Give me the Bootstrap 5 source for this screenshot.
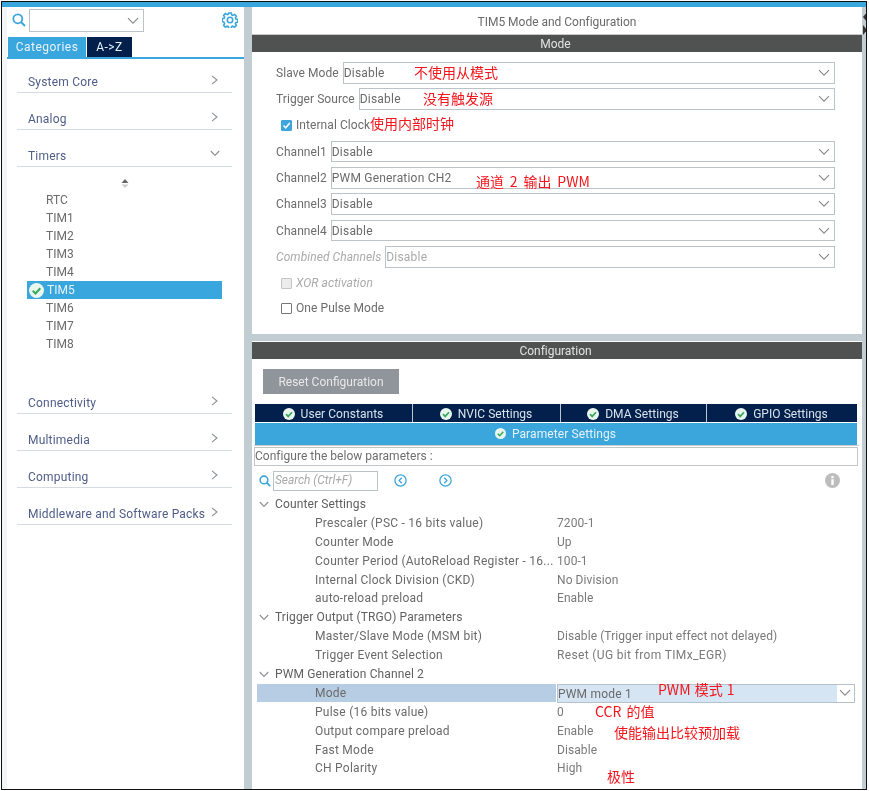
<!DOCTYPE html>
<html lang="en">
<head>
<meta charset="utf-8">
<title>TIM5 Mode and Configuration</title>
<link href="https://cdn.jsdelivr.net/npm/bootstrap@5.3.0/dist/css/bootstrap.min.css" rel="stylesheet">
<style>
html,body{margin:0;background:#fff;}
body{font-family:Roboto,"Liberation Sans",sans-serif;font-size:12px;letter-spacing:.2px;color:#666;overflow:hidden;}
svg{display:block;flex:none;}
.shot{position:relative;width:866px;height:789px;margin:1px 0 0 1px;border:1px solid #111;background:#c2ccd3;filter:blur(.35px);overflow:hidden;}
.topstrip{height:5px;background:#39a6dd;}
.main-row{height:782px;}
.side{width:242px;background:#fff;border-left:5px solid #f3f6f7;flex:none;}
.gutter{width:8px;background:#c2ccd3;flex:none;}
.work{width:610px;background:#fff;flex:none;}
.rail{width:4px;flex:none;}
.finder{height:30px;padding:2px 0 0 5px;}
.finder select,.dd{appearance:none;border:1px solid #bcc3c8;border-width:1.5px;border-radius:0;background:#fff url("data:image/svg+xml,%3Csvg xmlns='http://www.w3.org/2000/svg' viewBox='0 0 12 8'%3E%3Cpath d='M1 1.2l5 5 5-5' fill='none' stroke='%23888' stroke-width='1.1'/%3E%3C/svg%3E") no-repeat right 4px center/12px 8px;color:#6a6a6a;font:inherit;letter-spacing:.2px;padding:0 20px 0 0;outline:0;}
.finder select{width:115px;height:23px;margin-left:3px;}
.gearbox{margin-left:78px;margin-top:3px;}
.cat-tabs{height:20px;margin-left:1px;}
.cat-tab{height:20px;line-height:20px;text-align:center;font-size:12px;letter-spacing:.5px;color:#e8f2f8;}
.t-cat{width:78px;background:#39a6dd;}
.t-az{width:45px;margin-left:1px;background:#03204c;}
.cat-rule{height:2px;background:#39a6dd;}
.cat-list{padding:0 0 0 10px;width:225px;}
.cat-head{height:37px;border-bottom:1.5px solid #d5dbe1;color:#4f5d88;letter-spacing:.2px;padding:0 14px 2.5px 11px;display:flex;align-items:flex-end;justify-content:space-between;}
.cat-first{height:34px;}
.cat-head span{line-height:16px;white-space:nowrap;}
.cat-head svg{margin:0 0 5px 0;}
.cat-head svg.chev-down{margin:0 -2px 7px 0;}
.sort-mark{height:24px;padding-top:12px;}
.tim-list{height:186px;margin-left:10px;}
.tim-item{height:18px;line-height:18px;padding-left:19px;color:#6b6b6b;width:195px;letter-spacing:0;}
.tim-on{background:#39a6dd;color:#e6f3fa;padding-left:2px;display:flex;align-items:center;gap:3px;}
.title-bar{height:28px;line-height:30px;text-align:center;border-bottom:1px solid #c8c8c8;color:#6a6a6a;letter-spacing:-.02px;}
.dark-bar{height:17px;line-height:18px;text-align:center;background:#505251;color:#e2e2e2;letter-spacing:-.02px;padding-right:3px;}
.mode-form{height:282px;padding:10px 27px 0 24px;}
.f-row{height:21.5px;margin-bottom:4.8px;display:flex;align-items:center;gap:4px;white-space:nowrap;color:#6c6c6c;letter-spacing:.07px;}
.dd{flex:1 1 auto;min-width:0;height:21.5px;}
.dis{color:#aaa;font-style:italic;}
.dd-dis{color:#aaa;background-color:#fff;}
.box{width:11px;height:11px;border:1.5px solid #777;background:#fff;margin:0 0 0 5px;flex:none;border-radius:1px;}
.box-on{background:#3ea6dc;border-color:#3ea6dc;display:flex;align-items:center;justify-content:center;}
.box-dis{background:#ececec;border-color:#c4c4c4;}
.f-last{margin-top:-1px;}
.band{height:7px;background:#c2ccd3;}
.band-line{height:1px;background:#fff;}
.rst-wrap{height:45px;padding:10px 0 0 11px;}
.rst{width:136px;height:25px;border:0;border-radius:0;background:#8f959b;color:#e8e8e8;font-size:12px;letter-spacing:0;padding:1px 0 0;}
.rst:hover{background:#8f959b;color:#e8e8e8;}
.cfg-tabs{width:602px;margin-left:2.5px;height:18px;}
.cfg-tab{height:18px;padding-top:1px;background:#03204c;color:#d8e2ea;display:flex;align-items:center;justify-content:center;gap:6px;border-right:1px solid #b9c5d1;letter-spacing:.05px;flex:none;}
.cfg-tab:last-child{border-right:0;}
.ct1{width:158px;}.ct2{width:148px;}.ct3{width:146px;}.ct4{width:150px;}
.cfg-wide{margin-left:2.5px;width:602px;height:22px;background:#3aa6dc;color:#e4f2fa;margin-top:.5px;display:flex;align-items:center;justify-content:center;gap:6px;letter-spacing:.1px;}
.sep{height:1.5px;background:#c8cdd1;margin-left:2px;width:605px;}
.cfg-note{width:604px;margin:.5px 0 0 2px;height:19.5px;line-height:17px;border:1px solid #c2c6ca;padding-left:0;color:#6e6e6e;letter-spacing:.03px;}
.find-row{height:29px;padding:5px 0 0 7px;display:flex;align-items:flex-start;}
.find-box{width:105px;height:19.5px;margin-left:2px;border:1.5px solid #bcc3c8;line-height:17px;padding-left:1px;font-style:italic;color:#aaa;letter-spacing:-.05px;white-space:nowrap;}
.nav-a{margin:3px 0 0 16px;}
.nav-b{margin:3px 0 0 32px;}
.info-i{margin:2px 0 0 373px;}
.tree-row{height:18.9px;line-height:18.9px;display:flex;white-space:nowrap;color:#6a6a6a;letter-spacing:.25px;}
.tree-group{padding-left:7px;align-items:center;gap:6px;color:#5f5f5f;letter-spacing:.12px;}
.tree-key{width:305px;padding-left:63px;flex:none;overflow:hidden;}
.tree-val{color:#7a7a7a;letter-spacing:.08px;}
.val-wide{letter-spacing:.35px;}
.tree-sel .tree-key{background:#b7cde3;margin-left:5px;width:299px;padding-left:58px;height:18px;}
.dd-on{flex:none;width:298px;height:19px;margin-left:1px;background:url("data:image/svg+xml,%3Csvg xmlns='http://www.w3.org/2000/svg' viewBox='0 0 12 8'%3E%3Cpath d='M1 1.2l5 5 5-5' fill='none' stroke='%23888' stroke-width='1.1'/%3E%3C/svg%3E") no-repeat right 3px center/12px 8px,linear-gradient(to right,#d5e5f3 calc(100% - 17px),#fff 0);border-color:#b4c2cc;}
.note{position:absolute;font-family:"Noto Sans CJK SC","Liberation Sans",sans-serif;font-size:14px;line-height:20px;letter-spacing:0;color:#f2161c;white-space:nowrap;}
.n1{left:412px;top:60px;}
.n2{left:421px;top:86px;}
.n3{left:368px;top:110.500px;}
.n4{left:474px;top:169px;word-spacing:2.700px;}
.n5{left:656px;top:677px;word-spacing:1px;}
.n6{left:593px;top:699px;word-spacing:2px;}
.n7{left:612px;top:720px;}
.n8{left:605px;top:764px;}
.edge-arrow{position:absolute;right:-1px;}
.ea1{top:10px;}
.ea2{top:23px;}
</style>
</head>
<body>
<svg width="0" height="0" class="position-absolute">
<defs>
<symbol id="ok" viewBox="0 0 12 12"><circle cx="6" cy="6" r="6" fill="#e9f6ee"/><path d="M3 6.200l2.200 2.200L9 4.200" fill="none" stroke="#39a85f" stroke-width="1.700"/></symbol>
<symbol id="cr" viewBox="0 0 7 10"><path d="M1 .8L6 5l-5 4.200" fill="none" stroke="#8b9096" stroke-width="1.100"/></symbol>
<symbol id="cd" viewBox="0 0 10 7"><path d="M.8 1l4.200 4.500L9.200 1" fill="none" stroke="#8b9096" stroke-width="1.100"/></symbol>
<symbol id="mag" viewBox="0 0 14 14"><circle cx="5.800" cy="5.800" r="4.500" fill="none" stroke="#3aa6dc" stroke-width="1.800"/><path d="M9 9l4 4" stroke="#3aa6dc" stroke-width="2"/></symbol>
</defs>
</svg>
<div class="shot">
  <div class="topstrip"></div>
  <div class="d-flex main-row">
    <aside class="side">
      <div class="finder d-flex">
        <svg width="14" height="14" class="mt-1"><use href="#mag"/></svg>
        <select aria-label="Find"><option></option></select>
        <svg class="gearbox" width="16" height="16" viewBox="0 0 16 16"><path d="M6.700 1h2.600l.4 1.900 1.200.5 1.700-1 1.800 1.800-1 1.700.5 1.200 1.900.4v2.600l-1.900.4-.5 1.200 1 1.700-1.800 1.800-1.700-1-1.200.5-.4 1.900H6.700l-.4-1.900-1.200-.5-1.700 1-1.800-1.800 1-1.700-.5-1.200L.2 9.300V6.700l1.900-.4.5-1.200-1-1.700 1.800-1.800 1.700 1 1.200-.5z" fill="none" stroke="#3aa6dc" stroke-width="1.600"/><circle cx="8" cy="8" r="2.700" fill="none" stroke="#3aa6dc" stroke-width="1.600"/></svg>
      </div>
      <div class="d-flex cat-tabs">
        <div class="cat-tab t-cat">Categories</div>
        <div class="cat-tab t-az">A-&gt;Z</div>
      </div>
      <div class="cat-rule"></div>
      <div class="cat-list">
        <div class="cat-head cat-first"><span>System Core</span><svg width="7" height="10"><use href="#cr"/></svg></div>
        <div class="cat-head"><span>Analog</span><svg width="7" height="10"><use href="#cr"/></svg></div>
        <div class="cat-head"><span>Timers</span><svg class="chev-down" width="10" height="7"><use href="#cd"/></svg></div>
        <div class="sort-mark d-flex justify-content-center"><svg width="8" height="9" viewBox="0 0 8 9"><path d="M4 0l3.500 4h-7z" fill="#666"/><path d="M.5 5.500h7L4 9z" fill="#ccc"/></svg></div>
        <div class="tim-list">
          <div class="tim-item">RTC</div>
          <div class="tim-item">TIM1</div>
          <div class="tim-item">TIM2</div>
          <div class="tim-item">TIM3</div>
          <div class="tim-item">TIM4</div>
          <div class="tim-item tim-on"><svg width="15" height="15"><use href="#ok"/></svg><span>TIM5</span></div>
          <div class="tim-item">TIM6</div>
          <div class="tim-item">TIM7</div>
          <div class="tim-item">TIM8</div>
        </div>
        <div class="cat-head"><span>Connectivity</span><svg width="7" height="10"><use href="#cr"/></svg></div>
        <div class="cat-head"><span>Multimedia</span><svg width="7" height="10"><use href="#cr"/></svg></div>
        <div class="cat-head"><span>Computing</span><svg width="7" height="10"><use href="#cr"/></svg></div>
        <div class="cat-head"><span>Middleware and Software Packs</span><svg width="7" height="10"><use href="#cr"/></svg></div>
      </div>
    </aside>
    <div class="gutter"></div>
    <main class="work">
      <div class="title-bar">TIM5 Mode and Configuration</div>
      <div class="dark-bar">Mode</div>
      <div class="mode-form">
        <div class="f-row"><span>Slave Mode</span><select class="dd" aria-label="Slave Mode"><option>Disable</option></select></div>
        <div class="f-row"><span>Trigger Source</span><select class="dd" aria-label="Trigger Source"><option>Disable</option></select></div>
        <div class="f-row"><span class="box box-on"><svg width="9" height="9" viewBox="0 0 9 9"><path d="M1.500 4.500l2.200 2.300L7.800 2" fill="none" stroke="#fff" stroke-width="1.500"/></svg></span><span>Internal Clock</span></div>
        <div class="f-row"><span>Channel1</span><select class="dd" aria-label="Channel1"><option>Disable</option></select></div>
        <div class="f-row"><span>Channel2</span><select class="dd" aria-label="Channel2"><option>PWM Generation CH2</option></select></div>
        <div class="f-row"><span>Channel3</span><select class="dd" aria-label="Channel3"><option>Disable</option></select></div>
        <div class="f-row"><span>Channel4</span><select class="dd" aria-label="Channel4"><option>Disable</option></select></div>
        <div class="f-row"><span class="dis">Combined Channels</span><select class="dd dd-dis" aria-label="Combined Channels"><option>Disable</option></select></div>
        <div class="f-row"><span class="box box-dis"></span><span class="dis">XOR activation</span></div>
        <div class="f-row f-last"><span class="box"></span><span>One Pulse Mode</span></div>
      </div>
      <div class="band"></div>
      <div class="band-line"></div>
      <div class="dark-bar">Configuration</div>
      <div class="rst-wrap"><button type="button" class="btn rst">Reset Configuration</button></div>
      <div class="d-flex cfg-tabs">
        <div class="cfg-tab ct1"><svg width="12" height="12"><use href="#ok"/></svg>User Constants</div>
        <div class="cfg-tab ct2"><svg width="12" height="12"><use href="#ok"/></svg>NVIC Settings</div>
        <div class="cfg-tab ct3"><svg width="12" height="12"><use href="#ok"/></svg>DMA Settings</div>
        <div class="cfg-tab ct4"><svg width="12" height="12"><use href="#ok"/></svg>GPIO Settings</div>
      </div>
      <div class="cfg-wide"><svg width="11" height="11"><use href="#ok"/></svg>Parameter Settings</div>
      <div class="sep"></div>
      <div class="cfg-note">Configure the below parameters :</div>
      <div class="find-row">
        <svg width="12" height="12" class="mt-1"><use href="#mag"/></svg>
        <div class="find-box">Search (Ctrl+F)</div>
        <svg class="nav-a" width="13" height="13" viewBox="0 0 13 13"><circle cx="6.500" cy="6.500" r="5.600" fill="none" stroke="#3aa6dc" stroke-width="1.300"/><path d="M7.800 3.800L5.100 6.500l2.700 2.700" fill="none" stroke="#3aa6dc" stroke-width="1.300"/></svg>
        <svg class="nav-b" width="13" height="13" viewBox="0 0 13 13"><circle cx="6.500" cy="6.500" r="5.600" fill="none" stroke="#3aa6dc" stroke-width="1.300"/><path d="M5.200 3.800l2.700 2.700-2.700 2.700" fill="none" stroke="#3aa6dc" stroke-width="1.300"/></svg>
        <svg class="info-i" width="15" height="15" viewBox="0 0 15 15"><circle cx="7.500" cy="7.500" r="7.500" fill="#bdbdbd"/><rect x="6.300" y="6.300" width="2.400" height="5.700" fill="#fff"/><rect x="6.300" y="3" width="2.400" height="2.300" fill="#fff"/></svg>
      </div>
      <div class="tree-row tree-group"><svg width="10" height="7"><use href="#cd"/></svg><span>Counter Settings</span></div>
      <div class="tree-row"><div class="tree-key">Prescaler (PSC - 16 bits value)</div><div class="tree-val">7200-1</div></div>
      <div class="tree-row"><div class="tree-key">Counter Mode</div><div class="tree-val">Up</div></div>
      <div class="tree-row"><div class="tree-key">Counter Period (AutoReload Register - 16...</div><div class="tree-val">100-1</div></div>
      <div class="tree-row"><div class="tree-key">Internal Clock Division (CKD)</div><div class="tree-val">No Division</div></div>
      <div class="tree-row"><div class="tree-key">auto-reload preload</div><div class="tree-val">Enable</div></div>
      <div class="tree-row tree-group"><svg width="10" height="7"><use href="#cd"/></svg><span>Trigger Output (TRGO) Parameters</span></div>
      <div class="tree-row"><div class="tree-key">Master/Slave Mode (MSM bit)</div><div class="tree-val">Disable (Trigger input effect not delayed)</div></div>
      <div class="tree-row"><div class="tree-key">Trigger Event Selection</div><div class="tree-val val-wide">Reset (UG bit from TIMx_EGR)</div></div>
      <div class="tree-row tree-group"><svg width="10" height="7"><use href="#cd"/></svg><span>PWM Generation Channel 2</span></div>
      <div class="tree-row tree-sel"><div class="tree-key">Mode</div><select class="dd dd-on" aria-label="Mode"><option>PWM mode 1</option></select></div>
      <div class="tree-row"><div class="tree-key">Pulse (16 bits value)</div><div class="tree-val">0</div></div>
      <div class="tree-row"><div class="tree-key">Output compare preload</div><div class="tree-val">Enable</div></div>
      <div class="tree-row"><div class="tree-key">Fast Mode</div><div class="tree-val">Disable</div></div>
      <div class="tree-row"><div class="tree-key">CH Polarity</div><div class="tree-val">High</div></div>
    </main>
    <div class="rail"></div>
  </div>
  <svg class="edge-arrow ea1" width="4" height="10" viewBox="0 0 4 10"><path d="M4 0v10L0 5z" fill="#333"/></svg>
  <svg class="edge-arrow ea2" width="4" height="10" viewBox="0 0 4 10"><path d="M0 0v10l4-5z" fill="#333"/></svg>
  <span class="note n1">不使用从模式</span>
  <span class="note n2">没有触发源</span>
  <span class="note n3">使用内部时钟</span>
  <span class="note n4">通道 2 输出 PWM</span>
  <span class="note n5">PWM 模式 1</span>
  <span class="note n6">CCR 的值</span>
  <span class="note n7">使能输出比较预加载</span>
  <span class="note n8">极性</span>
</div>
<script src="https://cdn.jsdelivr.net/npm/bootstrap@5.3.0/dist/js/bootstrap.bundle.min.js"></script>
</body>
</html>
